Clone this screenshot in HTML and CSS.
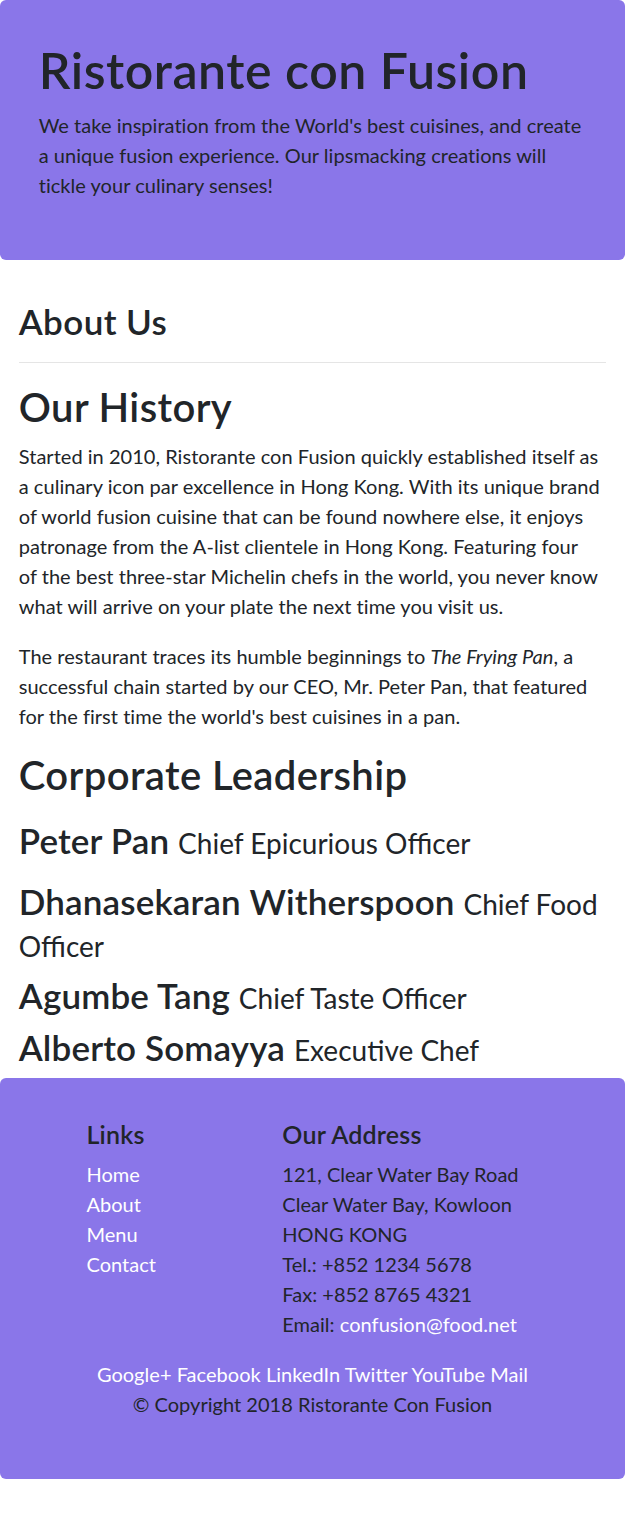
FILE: index.html
```html
<!DOCTYPE html>
<html lang="en">
<head>
<meta charset="utf-8">
<title>Ristorante con Fusion - About Us</title>
<link rel="stylesheet" href="styles.css">
</head>
<body>
<header class="jumbotron">
  <div class="container">
    <h1 class="jumbo-title">Ristorante con Fusion</h1>
    <p class="lead">We take inspiration from the World's best cuisines, and create a unique fusion experience. Our lipsmacking creations will tickle your culinary senses!</p>
  </div>
</header>

<main class="container">
  <h3 class="page-title">About Us</h3>
  <hr class="divider">
  <h2 class="section-title">Our History</h2>
  <p class="para">Started in 2010, Ristorante con Fusion quickly established itself as a culinary icon par excellence in Hong Kong. With its unique brand of world fusion cuisine that can be found nowhere else, it enjoys patronage from the A-list clientele in Hong Kong. Featuring four of&nbsp;the best three-star Michelin chefs in the world, you never know what will arrive on your plate the next time you visit us.</p>
  <p class="para">The restaurant traces its humble beginnings to <em>The Frying Pan</em>, a successful chain started by our CEO, Mr. Peter Pan, that featured for the first time the world's best cuisines in a pan.</p>
  <h2 class="section-title">Corporate Leadership</h2>
  <ul class="leaders">
    <li class="leader leader-first"><h3 class="leader-name">Peter Pan <small class="leader-role">Chief Epicurious Officer</small></h3></li>
    <li class="leader"><h3 class="leader-name">Dhanasekaran Witherspoon <small class="leader-role">Chief Food Officer</small></h3></li>
    <li class="leader"><h3 class="leader-name">Agumbe Tang <small class="leader-role">Chief Taste Officer</small></h3></li>
    <li class="leader"><h3 class="leader-name">Alberto Somayya <small class="leader-role">Executive Chef</small></h3></li>
  </ul>
</main>

<footer class="footer">
  <div class="footer-grid">
    <div class="footer-links">
      <h5 class="footer-heading">Links</h5>
      <ul class="link-list">
        <li><a class="flink" href="#">Home</a></li>
        <li><a class="flink" href="#">About</a></li>
        <li><a class="flink" href="#">Menu</a></li>
        <li><a class="flink" href="#">Contact</a></li>
      </ul>
    </div>
    <div class="footer-address">
      <h5 class="footer-heading">Our Address</h5>
      <address class="addr">
        121, Clear Water Bay Road<br>
        Clear Water Bay, Kowloon<br>
        HONG KONG<br>
        Tel.: +852 1234 5678<br>
        Fax: +852 8765 4321<br>
        Email: <a class="flink" href="#">confusion@food.net</a>
      </address>
    </div>
    <div class="footer-social">
      <a class="flink" href="#">Google+</a> <a class="flink" href="#">Facebook</a> <a class="flink" href="#">LinkedIn</a> <a class="flink" href="#">Twitter</a> <a class="flink" href="#">YouTube</a> <a class="flink" href="#">Mail</a>
    </div>
    <p class="copyright">© Copyright 2018 Ristorante Con Fusion</p>
  </div>
</footer>
</body>
</html>
```
FILE: styles.css
```css
* { box-sizing: border-box; }

html, body {
  margin: 0;
  padding: 0;
}

body {
  font-family: "Lato", "Open Sans", sans-serif;
  font-size: 20px;
  line-height: 30px;
  letter-spacing: 0.03px;
  color: #212529;
  background: #fff;
}

h1, h2, h3, h5 {
  margin: 0 0 10px 0;
  font-weight: 600;
  line-height: 1.2;
  letter-spacing: 0.4px;
}

.container {
  padding: 0 18.75px;
}

.jumbotron {
  background: #8a76e9;
  border-radius: 6px;
  padding: 40px 20px;
  margin: 0 0 40px 0;
}

.jumbo-title {
  font-size: 50px;
  letter-spacing: 0.55px;
}

.lead {
  font-size: 20px;
  line-height: 30px;
  margin: 0 0 20px 0;
}

.page-title {
  font-size: 35px;
}

.divider {
  border: 0;
  border-top: 1px solid #e5e5e5;
  margin: 20px 0;
}

.section-title {
  font-size: 40px;
}

.para {
  margin: 0 0 20px 0;
}

.leaders {
  list-style: none;
  margin: 0;
  padding: 0;
}

.leader-first {
  padding-top: 10px;
  padding-bottom: 9px;
}

.leader-name {
  font-size: 35px;
  letter-spacing: 0.15px;
}

.leader-role {
  font-size: 80%;
  font-weight: 400;
  letter-spacing: 0;
}

.footer {
  background: #8a76e9;
  border-radius: 6px;
  padding: 41px 18.75px 40px;
}

.footer-grid {
  display: grid;
  grid-template-columns: 1fr 4fr 7fr;
}

.footer-links {
  grid-column: 2;
  padding: 0 18.75px;
}

.footer-address {
  grid-column: 3;
  padding: 0 18.75px;
}

.footer-heading {
  font-size: 25px;
  line-height: 30px;
  letter-spacing: 0.2px;
}

.link-list {
  list-style: none;
  margin: 0;
  padding: 0;
}

.flink {
  color: #fff;
  text-decoration: none;
}

.addr {
  font-style: normal;
  margin: 0 0 20px 0;
}

.footer-social {
  grid-column: 1 / -1;
  text-align: center;
}

.copyright {
  grid-column: 1 / -1;
  text-align: center;
  margin: 0 0 20px 0;
}
```
